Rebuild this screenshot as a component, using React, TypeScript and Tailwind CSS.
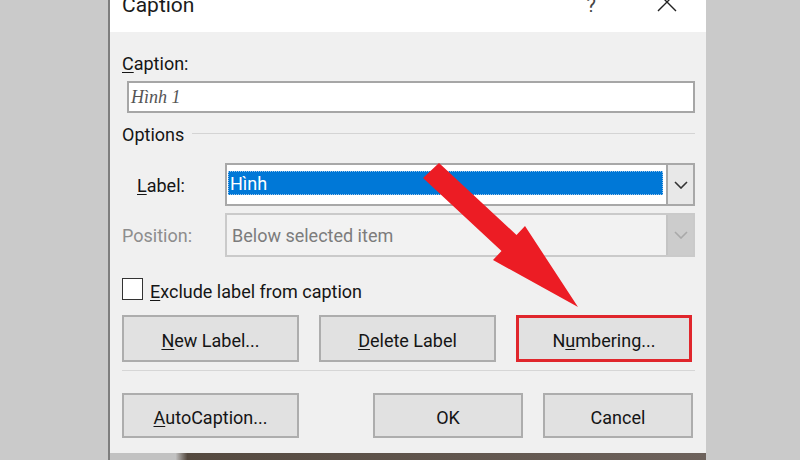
import React from "react";

function Chevron({ color }: { color: string }) {
  return (
    <svg width="14" height="8" viewBox="0 0 14 8">
      <path d="M1 1 L7 7 L13 1" fill="none" stroke={color} strokeWidth="1.6" />
    </svg>
  );
}

function Btn({ children, className = "" }: { children: React.ReactNode; className?: string }) {
  return (
    <div className={`flex items-center justify-center bg-[#e1e1e1] pt-[3px] text-[18px] text-[#151515] ${className}`}>
      {children}
    </div>
  );
}

export default function App() {
  return (
    <div className="relative flex h-[460px] w-[800px] overflow-hidden bg-[#cacaca] font-['Roboto',sans-serif]">
      <div className="w-[108px] shrink-0" />
      <div className="flex w-[598px] shrink-0 flex-col border-l-2 border-[#7e7e7e] bg-[#f0f0f0]">
        <div className="flex h-[32px] shrink-0 items-start bg-white">
          <span className="ml-[12px] mt-[-6px] text-[21px] leading-[22px] text-[#1b1b1b]">Caption</span>
          <span className="ml-auto mt-[-6px] text-[20px] leading-[22px] text-[#444]">?</span>
          <svg className="ml-[61px] mr-[29px] mt-[-8px]" width="20" height="20" viewBox="0 0 20 20">
            <path d="M1 1 L19 19 M19 1 L1 19" stroke="#222" strokeWidth="1.4" />
          </svg>
        </div>

        <div className="flex flex-1 flex-col pl-[12px] pr-[11px]">
          <div className="mt-[20px] text-[18px] leading-[24px] text-[#151515]">
            <u className="underline-offset-2">C</u>aption:
          </div>
          <div className="ml-[5px] mt-[5px] flex h-[32px] items-center border-2 border-[#a6a6a6] bg-white pl-[2px] font-['Liberation_Serif',serif] text-[18px] italic text-[#555]">
            Hình 1
          </div>
          <div className="mt-[10px] flex h-[24px] items-center">
            <span className="text-[18px] leading-[24px] text-[#151515]">Options</span>
            <div className="ml-[8px] mt-[-4px] h-px flex-1 bg-[#d4d4d4]" />
          </div>

          <div className="mt-[16px] flex h-[43px] items-center">
            <div className="w-[103px] pl-[15px] pt-[1px] text-[18px] text-[#151515]">
              <u className="underline-offset-2">L</u>abel:
            </div>
            <div className="flex h-full flex-1 border-2 border-[#a8a8a8] bg-white">
              <div className="mb-[9px] ml-[1px] mr-[3px] mt-[6px] flex flex-1 items-center border border-dotted border-[#9cc5ea] bg-[#0078d7] pl-[1px] pt-[1px] text-[18px] text-white">
                Hình
              </div>
              <div className="flex w-[27px] items-center justify-center border-l-2 border-[#a8a8a8] bg-[#e8e8e8]">
                <Chevron color="#333" />
              </div>
            </div>
          </div>

          <div className="mt-[7px] flex h-[44px] items-center">
            <div className="w-[103px] pt-[1px] text-[18px] text-[#8d8d8d]">Position:</div>
            <div className="flex h-full flex-1 border-2 border-[#cacaca] bg-[#f2f2f2]">
              <div className="flex flex-1 items-center pl-[5px] pt-[1px] text-[18px] text-[#7c7c7c]">Below selected item</div>
              <div className="flex w-[27px] items-center justify-center border-l-2 border-[#c4c4c4] bg-[#cccccc]">
                <Chevron color="#a9a9a9" />
              </div>
            </div>
          </div>

          <div className="mt-[21px] flex h-[22px] items-center">
            <div className="h-[22px] w-[21px] shrink-0 border-[1.5px] border-[#333] bg-white" />
            <span className="ml-[7px] mt-[6px] text-[18px] leading-[22px] text-[#151515]">
              <u className="underline-offset-2">E</u>xclude label from caption
            </span>
          </div>

          <div className="mt-[15px] flex h-[47px] gap-[20px]">
            <Btn className="w-[177px] border-2 border-[#adadad]">
              <u className="underline-offset-2">N</u>ew Label...
            </Btn>
            <Btn className="w-[177px] border-2 border-[#adadad]">
              <u className="underline-offset-2">D</u>elete Label
            </Btn>
            <Btn className="w-[176px] border-[3px] border-[#e0262c]">
              N<u className="underline-offset-2">u</u>mbering...
            </Btn>
          </div>

          <div className="mt-[8px] h-px bg-[#d6d6d6]" />

          <div className="mt-[22px] flex h-[45px]">
            <Btn className="w-[177px] border-2 border-[#adadad]">
              <u className="underline-offset-2">A</u>utoCaption...
            </Btn>
            <Btn className="ml-[74px] w-[150px] border-2 border-[#adadad]">OK</Btn>
            <Btn className="ml-[20px] w-[150px] border-2 border-[#adadad]">Cancel</Btn>
          </div>
        </div>

        <div className="h-[7px] shrink-0 bg-gradient-to-r from-[#c2c2c2] from-[11%] via-[#54493f] via-[13%] to-[#6d625c]" />
      </div>

      <svg className="pointer-events-none absolute left-0 top-0" width="800" height="460" viewBox="0 0 800 460">
        <polygon
          points="423,178 439,163 516.5,235 525,226 578,307 493,260 501.5,251"
          fill="#ec1c24"
        />
      </svg>
    </div>
  );
}
